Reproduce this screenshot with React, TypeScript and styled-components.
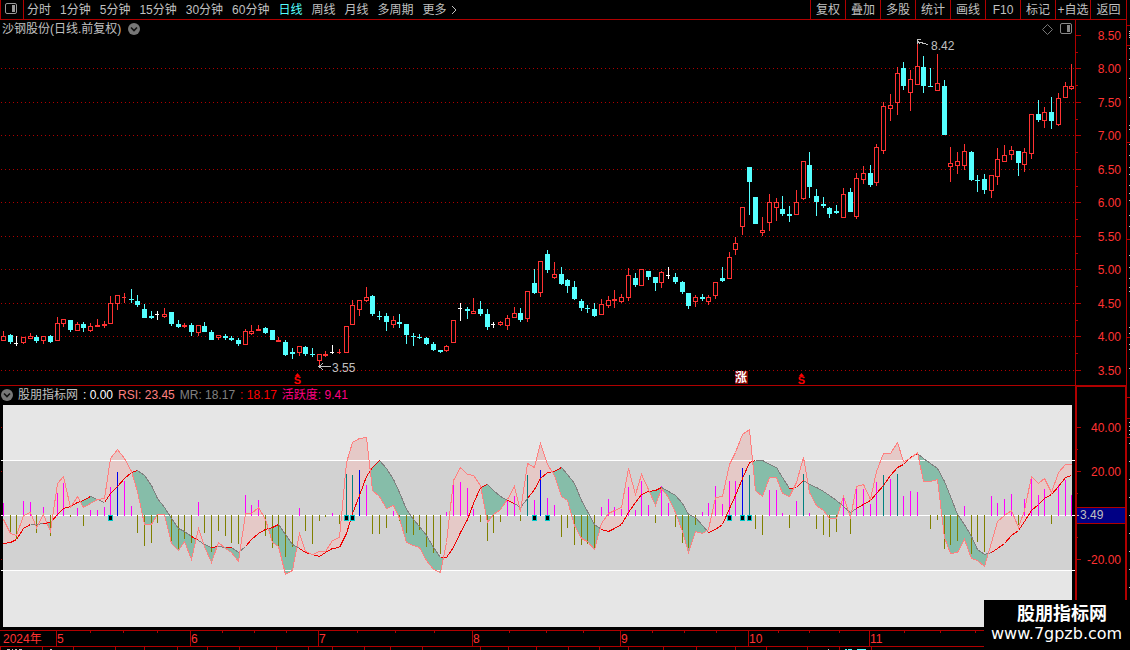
import React, { useLayoutEffect, useRef, useState } from "react";
import styled, { createGlobalStyle } from "styled-components";

const LINE = "#b00000";
const RED = "#ff3232";
const CYAN = "#54ffff";
const SILVER = "#c0c0c0";

const GlobalStyle = createGlobalStyle`
  * { box-sizing: border-box; }
  html, body { margin: 0; padding: 0; background: #000; overflow: hidden; }
  body, button { font-family: "Liberation Sans", "Noto Sans CJK SC", sans-serif; font-size: 12px; }
`;

const Page = styled.main`
  position: relative;
  display: flex;
  flex-direction: column;
  height: 100vh;
  overflow: hidden;
  background: #000;
  color: ${SILVER};
`;

const Toolbar = styled.nav`
  display: flex;
  flex: none;
  height: 20px;
  margin-right: 3px;
  border-left: 1px solid ${LINE};
  border-right: 1px solid ${LINE};
  border-bottom: 1px solid ${LINE};
`;

const IconButton = styled.button`
  display: flex;
  align-items: center;
  justify-content: center;
  width: 23px;
  padding: 0 2px 2px 0;
  border: 0;
  border-right: 1px solid ${LINE};
  background: transparent;
`;

const Periods = styled.div`
  display: flex;
  flex: 1;
  gap: 9px;
  padding-left: 3px;
`;

const PeriodButton = styled.button<{ $active?: boolean }>`
  padding: 0;
  border: 0;
  background: transparent;
  color: ${(p) => (p.$active ? CYAN : SILVER)};
  line-height: 18px;
  white-space: nowrap;
`;

const MoreButton = styled(PeriodButton)`
  display: flex;
  align-items: center;
  gap: 3px;
`;

const ActionButton = styled.button<{ $last?: boolean }>`
  width: ${(p) => (p.$last ? 36 : 35)}px;
  padding: 0;
  border: 0;
  border-left: 1px solid ${LINE};
  background: transparent;
  color: ${SILVER};
  line-height: 18px;
  white-space: nowrap;
`;

const Panel = styled.section`
  display: grid;
  grid-template-columns: minmax(0, 1fr) 55px;
  flex: none;
`;

const ChartColumn = styled.div<{ $ruled?: boolean }>`
  min-width: 0;
  border-bottom: ${(p) => (p.$ruled ? `1px solid ${LINE}` : "0")};
`;

const TitleRow = styled.header`
  display: flex;
  align-items: center;
  justify-content: space-between;
  height: 18px;
  padding: 0 3px 0 2px;
`;

const Title = styled.h1`
  display: flex;
  align-items: center;
  gap: 7px;
  margin: 0;
  font-size: 12px;
  font-weight: 400;
  line-height: 18px;
`;

const TitleTools = styled.div`
  display: flex;
  align-items: center;
  gap: 7px;
`;

const Legend = styled.header`
  display: flex;
  align-items: center;
  gap: 5px;
  height: 19px;
  padding: 0 0 2px 1px;
  white-space: nowrap;
`;

const LegendItem = styled.span<{ $color: string }>`
  color: ${(p) => p.$color};
  line-height: 16px;
`;

const Svg = styled.svg`
  display: block;
  width: 100%;
  overflow: hidden;
`;

const TimeAxis = styled.footer`
  flex: none;
  margin: 3px 55px 0 0;
`;

const Watermark = styled.aside`
  position: absolute;
  right: 0;
  bottom: 0;
  width: 146px;
  height: 50px;
  padding: 4px 0 0 7px;
  background: #000;
  color: #fff;
`;

const WatermarkName = styled.strong`
  display: block;
  padding-left: 26px;
  font: 700 18px/20px "Liberation Sans", "Noto Sans CJK SC", sans-serif;
`;

const WatermarkUrl = styled.span`
  display: block;
  font: 16px/20px "DejaVu Sans", sans-serif;
`;

const periods = ["分时", "1分钟", "5分钟", "15分钟", "30分钟", "60分钟", "日线", "周线", "月线", "多周期"];
const actions = ["复权", "叠加", "多股", "统计", "画线", "F10", "标记", "+自选"];

/* kind, high, body top, body bottom, low (panel rows) */
const candleText = `r331,336,341,341 c334,335,342,344 w336,343,344,346 r337,337,343,344 r333,336,339,339 c335,337,341,343 r336,336,341,344 c335,336,342,343 r317,323,341,341 r319,319,324,327
c320,320,330,332 r322,324,331,331 c322,324,328,332 r323,326,331,332 r319,325,327,327 r321,324,326,328 r296,303,324,324 r295,295,304,310 r293,297,298,303 c289,299,300,303
c295,301,305,307 c304,309,318,318 c311,316,318,319 w311,314,315,320 r308,314,317,318 c312,312,324,326 c320,324,327,328 r323,325,327,328 c323,325,332,336 r325,325,333,336
c322,326,332,332 c330,332,340,340 r335,335,338,340 c334,336,338,340 c336,338,340,341 c338,340,344,346 r329,331,345,345 r325,331,334,335 r325,329,331,331 c327,328,333,334
c330,330,340,340 r337,340,342,342 c340,342,355,356 c348,352,354,359 r346,346,353,356 c346,347,354,356 c348,354,355,357 r354,354,361,365 r351,354,356,357 w345,352,353,354
r349,352,353,354 r326,326,353,353 r300,305,325,325 r300,300,310,316 r287,297,301,302 c295,296,314,316 c311,316,317,320 c313,316,322,331 r316,320,325,328 c314,322,324,328
c324,324,335,344 c333,336,337,346 c334,337,338,339 c337,338,344,345 c342,344,350,351 c350,350,352,353 r345,346,351,352 r320,320,343,343 w303,308,309,321 c307,309,311,319
r298,311,314,314 c301,309,314,316 c309,314,327,330 w322,324,325,328 r321,322,325,326 r315,318,326,330 r307,313,318,318 c308,313,320,322 r291,291,319,322 c269,283,293,294
r261,261,293,297 c250,254,270,273 r262,274,278,279 c267,274,284,285 c279,280,286,293 c281,287,299,300 c299,301,308,311 c305,308,309,313 c303,309,316,317 r299,304,315,315
r296,300,306,308 r290,299,301,308 r294,297,302,303 r268,275,298,301 c273,278,285,287 r269,269,286,286 c271,271,277,280 c277,277,283,291 r271,272,283,288 w267,275,276,279
c273,277,282,284 c281,282,292,294 c293,293,306,309 r295,297,302,307 c294,297,299,301 r295,297,302,305 r282,282,296,299 c267,278,281,282 r252,257,279,279 r237,243,250,255
r207,207,227,235 c167,167,182,215 c197,197,224,224 r217,230,233,236 r194,202,223,231 r198,202,208,221 c196,209,214,216 c206,214,216,222 r190,202,215,215 r161,161,199,200
c152,165,187,198 c189,196,202,216 c197,204,206,208 c207,208,214,218 c205,211,213,214 r188,194,218,218 c188,192,212,212 r173,178,217,219 r166,173,180,184 c165,173,185,187
r144,147,183,186 r102,106,151,154 r94,105,109,121 r67,73,103,115 c62,68,86,90 r70,79,93,111 r40,66,85,85 c56,67,86,93 c68,86,87,87 r54,83,91,91
c80,86,135,135 r147,163,167,182 r152,161,166,174 r144,151,166,170 c151,152,180,181 c175,180,181,192 c174,179,190,194 r175,175,191,198 r148,159,177,185 r145,155,162,162
r146,150,155,160 c151,151,163,176 r148,152,165,172 r114,114,154,159 c100,114,120,122 r107,112,121,128 c97,112,121,129 r93,98,125,126 r82,86,98,98 r64,86,89,90`;

const candles = candleText.split(/\s+/).map((t) => {
  const [high, top, bottom, low] = t.slice(1).split(",").map(Number);
  return { kind: t[0], high, top, bottom, low };
});

const rsi = [
  519,533,535,515,512,527,514,531,483,476,507,496,507,503,499,498,458,449,458,471,491,524,524,514,514,543,550,541,559,528,
  546,562,542,548,552,561,513,513,507,519,542,546,574,570,533,551,554,551,551,540,537,462,442,438,437,490,496,508,505,518,
  542,545,547,560,569,572,542,480,467,474,475,485,522,514,509,499,486,511,463,467,443,464,475,496,500,525,538,541,549,523,
  513,510,507,468,494,474,489,505,488,497,512,531,552,531,533,529,497,496,464,452,434,429,490,496,477,477,493,496,482,457,
  492,505,510,518,518,496,517,486,484,499,471,453,453,442,461,458,452,481,481,479,537,553,552,539,558,560,566,542,521,515,
  510,527,510,476,483,478,492,472,464,464,
];

const mr = [
  543,542,539,528,524,524,523,522,514,508,506,502,500,496,499,502,493,486,478,472,470,475,485,498,507,518,528,531,536,540,
  544,547,546,547,547,552,546,539,533,529,527,524,534,544,548,552,554,556,552,548,547,533,513,495,476,467,460,468,479,492,
  509,519,526,535,547,557,557,547,532,519,503,487,484,490,496,500,503,507,498,489,478,472,471,467,474,483,500,511,524,529,
  531,528,524,512,502,494,491,490,487,491,495,503,514,517,525,532,529,524,508,495,478,462,460,460,464,467,477,488,487,480,
  484,487,491,495,500,506,512,508,504,500,493,485,475,467,464,457,453,458,463,468,481,496,514,524,536,549,554,552,548,543,
  535,530,521,510,504,498,494,486,477,475,
];

/* tip row of each activity bar; 0 is an empty slot */
const activity = [
  503,533,539,501,502,533,507,536,493,483,517,508,526,510,510,507,487,472,481,506,533,546,543,523,517,544,549,539,543,502,
  533,552,531,536,543,544,495,505,500,536,548,546,557,547,508,531,544,521,517,513,524,474,475,470,485,534,534,528,511,521,
  533,535,530,547,553,554,512,479,482,488,509,522,541,533,522,500,496,521,475,500,470,498,505,537,528,545,545,544,548,507,
  499,507,509,487,510,481,505,523,486,503,527,543,548,525,512,503,486,504,481,481,468,475,529,535,490,490,513,528,501,474,
  513,529,535,537,532,495,534,488,489,504,482,475,479,474,496,491,492,0,529,520,549,545,541,506,554,542,552,496,503,499,
  494,525,499,479,495,489,524,485,480,495,
];
const blueBars = new Set([17, 53, 80, 110]);
const tealBars = new Set([51, 52, 78, 111, 119, 131, 133]);
const markers = [16, 51, 52, 79, 81, 108, 110, 111];
const redFalls = new Set([29, 34, 45, 46, 47, 50, 66, 76, 90]);
const grayRises = new Set([6, 36, 78, 127, 147]);

function useWidth(initial: number) {
  const ref = useRef<HTMLDivElement>(null);
  const [width, setWidth] = useState(initial);
  useLayoutEffect(() => {
    const el = ref.current;
    if (!el) return;
    const update = () => setWidth(el.clientWidth);
    update();
    const observer = new ResizeObserver(update);
    observer.observe(el);
    return () => observer.disconnect();
  }, []);
  return [ref, width] as const;
}

const columnX = (i: number, width: number) => Math.floor(3.35 + (i * (width - 6.55)) / 159);

const ChevronDot = () => (
  <svg width="12" height="12" viewBox="0 0 12 12" aria-hidden="true">
    <circle cx="6" cy="6" r="6" fill="#777" />
    <path d="M3 4.5 6 7.5 9 4.5" fill="none" stroke="#111" strokeWidth="1.6" />
  </svg>
);

const PaneIcon = ({ color }: { color: string }) => (
  <svg width="12" height="12" viewBox="0 0 12 12" aria-hidden="true">
    <rect x="0.5" y="0.5" width="11" height="10" rx="1.5" fill="none" stroke={color} />
    <rect x="7" y="2" width="3" height="7" fill={color} />
  </svg>
);

const gridRows = [68, 102, 135, 169, 202, 236, 269, 303, 336, 370];

function CandleChart({ width }: { width: number }) {
  const x = (i: number) => columnX(i, width);
  const peak = x(136);
  const trough = x(47);
  return (
    <Svg height="347" viewBox={`0 38 ${width} 347`} role="img" aria-label="日线">
      {gridRows.map((y) => (
        <line key={y} x1="1" x2={width} y1={y + 0.5} y2={y + 0.5} stroke={LINE} strokeDasharray="1 3" shapeRendering="crispEdges" />
      ))}
      <g shapeRendering="crispEdges">
        {candles.map((c, i) => {
          const cx = x(i);
          const fill = c.kind === "r" ? RED : c.kind === "c" ? CYAN : "#fff";
          const hollow = c.kind === "r" && c.bottom - c.top > 2;
          const cross = c.bottom - c.top === 1 && c.kind !== "c";
          if (!hollow)
            return (
              <g key={i} fill={fill}>
                <rect x={cx} y={c.high} width="1" height={c.low - c.high} />
                <rect x={cx - 2} y={c.top} width={cross ? 4 : 5} height={c.bottom - c.top} />
              </g>
            );
          return (
            <g key={i} fill={fill}>
              <rect x={cx} y={c.high} width="1" height={c.top - c.high} />
              <rect x={cx} y={c.bottom} width="1" height={c.low - c.bottom} />
              <rect x={cx - 1.5} y={c.top + 0.5} width="4" height={c.bottom - c.top - 1} fill="#000" stroke={fill} />
            </g>
          );
        })}
      </g>
      <g fill="none" stroke={SILVER} shapeRendering="crispEdges">
        <path d={`M${peak + 11} 44.5 L${peak} 41.5 M${peak + 4} 39.5 H${peak + 0.5} V44 M${peak} 41 l3 3`} />
        <path d={`M${trough + 12} 366.5 H${trough} M${trough + 4} 363 L${trough} 366.5 L${trough + 4} 370`} />
      </g>
      <g fill={SILVER} fontSize="12">
        <text x={peak + 14} y="50">8.42</text>
        <text x={trough + 13} y="372">3.55</text>
      </g>
      {[x(44) - 2, x(119) - 2].map((sx) => (
        <g key={sx} fill="#f00">
          <path d={`M${sx - 2} 376 L${sx + 0.5} 373 L${sx + 3} 376Z`} />
          <text x={sx + 0.5} y="384" textAnchor="middle" fontSize="11" fontWeight="700">S</text>
        </g>
      ))}
      <rect x={x(110) - 7} y="371" width="13" height="13" fill="#800000" />
      <text x={x(110) - 1} y="382" textAnchor="middle" fontSize="12" fontWeight="700" fill="#fff">涨</text>
    </Svg>
  );
}

function fillPaths(width: number) {
  let above = "";
  let below = "";
  for (let i = 1; i < rsi.length; i++) {
    const x0 = columnX(i - 1, width) + 0.5;
    const x1 = columnX(i, width) + 0.5;
    const d0 = rsi[i - 1] - mr[i - 1];
    const d1 = rsi[i] - mr[i];
    const area = (ax: number, ar: number, am: number, bx: number, br: number, bm: number) => {
      const d = `M${ax} ${ar}L${bx} ${br}L${bx} ${bm}L${ax} ${am}Z`;
      if (ar + br < am + bm) above += d;
      else below += d;
    };
    if (d0 * d1 < 0) {
      const t = d0 / (d0 - d1);
      const cx = x0 + t * (x1 - x0);
      const cy = mr[i - 1] + t * (mr[i] - mr[i - 1]);
      area(x0, rsi[i - 1], mr[i - 1], cx, cy, cy);
      area(cx, cy, cy, x1, rsi[i], mr[i]);
    } else {
      area(x0, rsi[i - 1], mr[i - 1], x1, rsi[i], mr[i]);
    }
  }
  return { above, below };
}

function IndicatorChart({ width }: { width: number }) {
  const x = (i: number) => columnX(i, width);
  const { above, below } = fillPaths(width);
  let rising = "";
  let falling = "";
  for (let i = 1; i < mr.length; i++) {
    const d = `M${x(i - 1) + 0.5} ${mr[i - 1] + 0.5}L${x(i) + 0.5} ${mr[i] + 0.5}`;
    const red = (mr[i] < mr[i - 1] && !grayRises.has(i)) || redFalls.has(i);
    if (red) rising += d;
    else falling += d;
  }
  return (
    <Svg height="222" viewBox={`0 405 ${width} 222`} shapeRendering="crispEdges" role="img" aria-label="RSI">
      <rect x="3" y="405" width={width - 6} height="222" fill="#e6e6e6" />
      <rect x="3" y="460" width={width - 6} height="110" fill="#d2d2d2" />
      <path d={above} fill="#e5c9c7" />
      <path d={below} fill="#86bda9" />
      {[460, 515, 570].map((y) => (
        <rect key={y} x="1" y={y} width={width - 1} height="1" fill="#fff" />
      ))}
      {[427, 471, 559].map((y) => (
        <rect key={y} x="1" y={y} width="1" height="1" fill={LINE} />
      ))}
      {activity.map((tip, i) => {
        if (!tip) return null;
        const up = tip < 515;
        const fill = blueBars.has(i) ? "#0000f0" : tealBars.has(i) ? "#008080" : up ? "#f0f" : "#808000";
        return <rect key={i} x={x(i)} y={up ? tip : 515} width="1" height={up ? 516 - tip : tip - 515} fill={fill} />;
      })}
      <g fill="none">
        <path d={falling} stroke="#808080" />
        <path d={rising} stroke="#f00000" />
        <polyline points={rsi.map((y, i) => `${x(i) + 0.5},${y + 0.5}`).join(" ")} stroke="#ff8080" />
      </g>
      {markers.map((i) => (
        <rect key={i} x={x(i) - 1.5} y="515.5" width="4" height="5" fill="#000" stroke="#00c8c8" />
      ))}
    </Svg>
  );
}

const priceLabels = ["8.50", "8.00", "7.50", "7.00", "6.50", "6.00", "5.50", "5.00", "4.50", "4.00", "3.50"];
const priceRows = [35, ...gridRows];
const edgeMarks = [
  48, 59, 78, 97, 125, 129, 144, 155, 167, 174, 185, 193, 200, 215, 226, 255, 267, 278, 287, 291, 327, 333, 344, 349, 368,
];

function PriceAxis() {
  return (
    <Svg height="366" viewBox="0 20 55 366">
      <g fill={LINE} shapeRendering="crispEdges">
        <rect x="0" y="20" width="1" height="366" />
        <rect x="51" y="20" width="1" height="366" />
        <rect x="0" y="385" width="51" height="1" />
        {priceRows.map((y, i) => (
          <React.Fragment key={y}>
            <rect x="1" y={y} width="5" height="1" />
            {i < 10 && <rect x="1" y={y + 17} width="2" height="1" />}
          </React.Fragment>
        ))}
        {[25, 45, 142, 239, 337].map((y) => (
          <rect key={y} x="52" y={y} width="3" height="1" />
        ))}
      </g>
      <g fill={SILVER} shapeRendering="crispEdges">
        {[31, 33, 35, 37, ...edgeMarks].map((y) => (
          <rect key={y} x="54" y={y} width="1" height="1" />
        ))}
      </g>
      <g fill={RED} fontSize="12" textAnchor="end">
        {priceLabels.map((label, i) => (
          <text key={label} x="46" y={priceRows[i] + 5}>{label}</text>
        ))}
      </g>
    </Svg>
  );
}

function IndicatorAxis() {
  return (
    <Svg height="241" viewBox="0 386 55 241">
      <g fill={LINE} shapeRendering="crispEdges">
        <rect x="0" y="386" width="52" height="1" />
        <rect x="0" y="386" width="2" height="241" />
        <rect x="50" y="386" width="2" height="241" />
        {[427, 471, 559].map((y) => <rect key={y} x="2" y={y} width="4" height="1" />)}
        {[449, 493, 537].map((y) => <rect key={y} x="2" y={y} width="1" height="1" />)}
        {[397, 418, 437].map((y) => <rect key={y} x="52" y={y} width="3" height="1" />)}
        <rect x="2" y="507" width="48" height="17" />
      </g>
      <rect x="2" y="508" width="48" height="15" fill="#000084" shapeRendering="crispEdges" />
      <g fill={SILVER} shapeRendering="crispEdges">
        <rect x="2" y="515" width="2" height="1" />
        {[422, 426, 430, 434, 443, 461, 479, 497, 515, 533, 551, 569, 587].map((y) => (
          <rect key={y} x="54" y={y} width="1" height="1" />
        ))}
      </g>
      <text x="5" y="519" fontSize="12" fill={SILVER}>3.49</text>
      <g fill={RED} fontSize="12" textAnchor="end">
        <text x="46" y="432">40.00</text>
        <text x="46" y="476">20.00</text>
        <text x="46" y="564">-20.00</text>
      </g>
    </Svg>
  );
}

const months = [
  { label: "5", column: 8 },
  { label: "6", column: 28 },
  { label: "7", column: 47 },
  { label: "8", column: 70 },
  { label: "9", column: 92 },
  { label: "10", column: 111 },
  { label: "11", column: 129 },
];
const upperTicks = [90, 123, 157, 222, 254, 286, 357, 395, 434, 509, 546, 583, 652, 684, 716, 778, 809, 839, 904, 940, 975];
const lowerTicks = [0, 42, 73, 115, 144, 177, 207, 239, 276, 308, 332, 364, 390, 422, 480, 508, 536, 568, 599, 628, 663, 696, 735, 766, 807, 839, 871];
const clippedMarks = [[7, 3], [12, 1], [15, 2], [19, 3], [50, 2]];
const clippedCyan = [[845, 2], [848, 4], [857, 9]];

function Timeline({ width }: { width: number }) {
  const scale = width / 1075;
  const monthX = (column: number) => columnX(column, width) - 1;
  return (
    <Svg height="20" viewBox={`0 630 ${width} 20`}>
      <g fill={LINE} shapeRendering="crispEdges">
        <rect x="0" y="630" width={width} height="1" />
        <rect x="0" y="646" width={width} height="1" />
        {months.map((m) => <rect key={m.label} x={monthX(m.column)} y="630" width="1" height="16" />)}
        {upperTicks.map((t) => <rect key={t} x={Math.round(t * scale)} y="631" width="1" height="2" />)}
        {lowerTicks.map((t) => <rect key={t} x={Math.round(t * scale)} y="647" width="1" height="3" />)}
      </g>
      <g shapeRendering="crispEdges">
        {clippedMarks.map(([mx, w]) => <rect key={mx} x={mx} y="649" width={w} height="1" fill={SILVER} />)}
        <rect x={Math.round(828 * scale)} y="649" width="1" height="1" fill={SILVER} />
        {clippedCyan.map(([mx, w]) => <rect key={mx} x={Math.round(mx * scale)} y="649" width={w} height="1" fill={CYAN} />)}
      </g>
      <g fill={RED} fontSize="12">
        <text x="3" y="643">2024年</text>
        {months.map((m) => <text key={m.label} x={monthX(m.column) + 1} y="643">{m.label}</text>)}
      </g>
    </Svg>
  );
}

export default function App() {
  const [chartRef, width] = useWidth(1075);
  return (
    <>
      <GlobalStyle />
      <Page>
        <Toolbar>
          <IconButton aria-label="侧栏"><PaneIcon color="#999" /></IconButton>
          <Periods>
            {periods.map((p) => (
              <PeriodButton key={p} $active={p === "日线"}>{p}</PeriodButton>
            ))}
            <MoreButton>
              更多
              <svg width="8" height="10" viewBox="0 0 8 10" aria-hidden="true">
                <path d="M2 1 6 5 2 9" fill="none" stroke={SILVER} />
              </svg>
            </MoreButton>
          </Periods>
          {actions.map((a) => <ActionButton key={a}>{a}</ActionButton>)}
          <ActionButton $last>返回</ActionButton>
        </Toolbar>

        <Panel>
          <ChartColumn ref={chartRef} $ruled>
            <TitleRow>
              <Title>沙钢股份(日线.前复权) <ChevronDot /></Title>
              <TitleTools>
                <svg width="11" height="11" viewBox="0 0 11 11" aria-hidden="true">
                  <path d="M5.5 0.5 10.5 5.5 5.5 10.5 0.5 5.5Z" fill="none" stroke="#777" />
                </svg>
                <PaneIcon color="#888" />
              </TitleTools>
            </TitleRow>
            <CandleChart width={width} />
          </ChartColumn>
          <PriceAxis />
        </Panel>

        <Panel>
          <ChartColumn>
            <Legend>
              <ChevronDot />
              <LegendItem $color={SILVER}>股朋指标网</LegendItem>
              <LegendItem $color="#fff">: 0.00</LegendItem>
              <LegendItem $color="#ff8080">RSI: 23.45</LegendItem>
              <LegendItem $color="#808080">MR: 18.17</LegendItem>
              <LegendItem $color="#ff0000">: 18.17</LegendItem>
              <LegendItem $color="#ff0080">活跃度: 9.41</LegendItem>
            </Legend>
            <IndicatorChart width={width} />
          </ChartColumn>
          <IndicatorAxis />
        </Panel>

        <TimeAxis>
          <Timeline width={width} />
        </TimeAxis>

        <Watermark>
          <WatermarkName>股朋指标网</WatermarkName>
          <WatermarkUrl>www.7gpzb.com</WatermarkUrl>
        </Watermark>
      </Page>
    </>
  );
}
